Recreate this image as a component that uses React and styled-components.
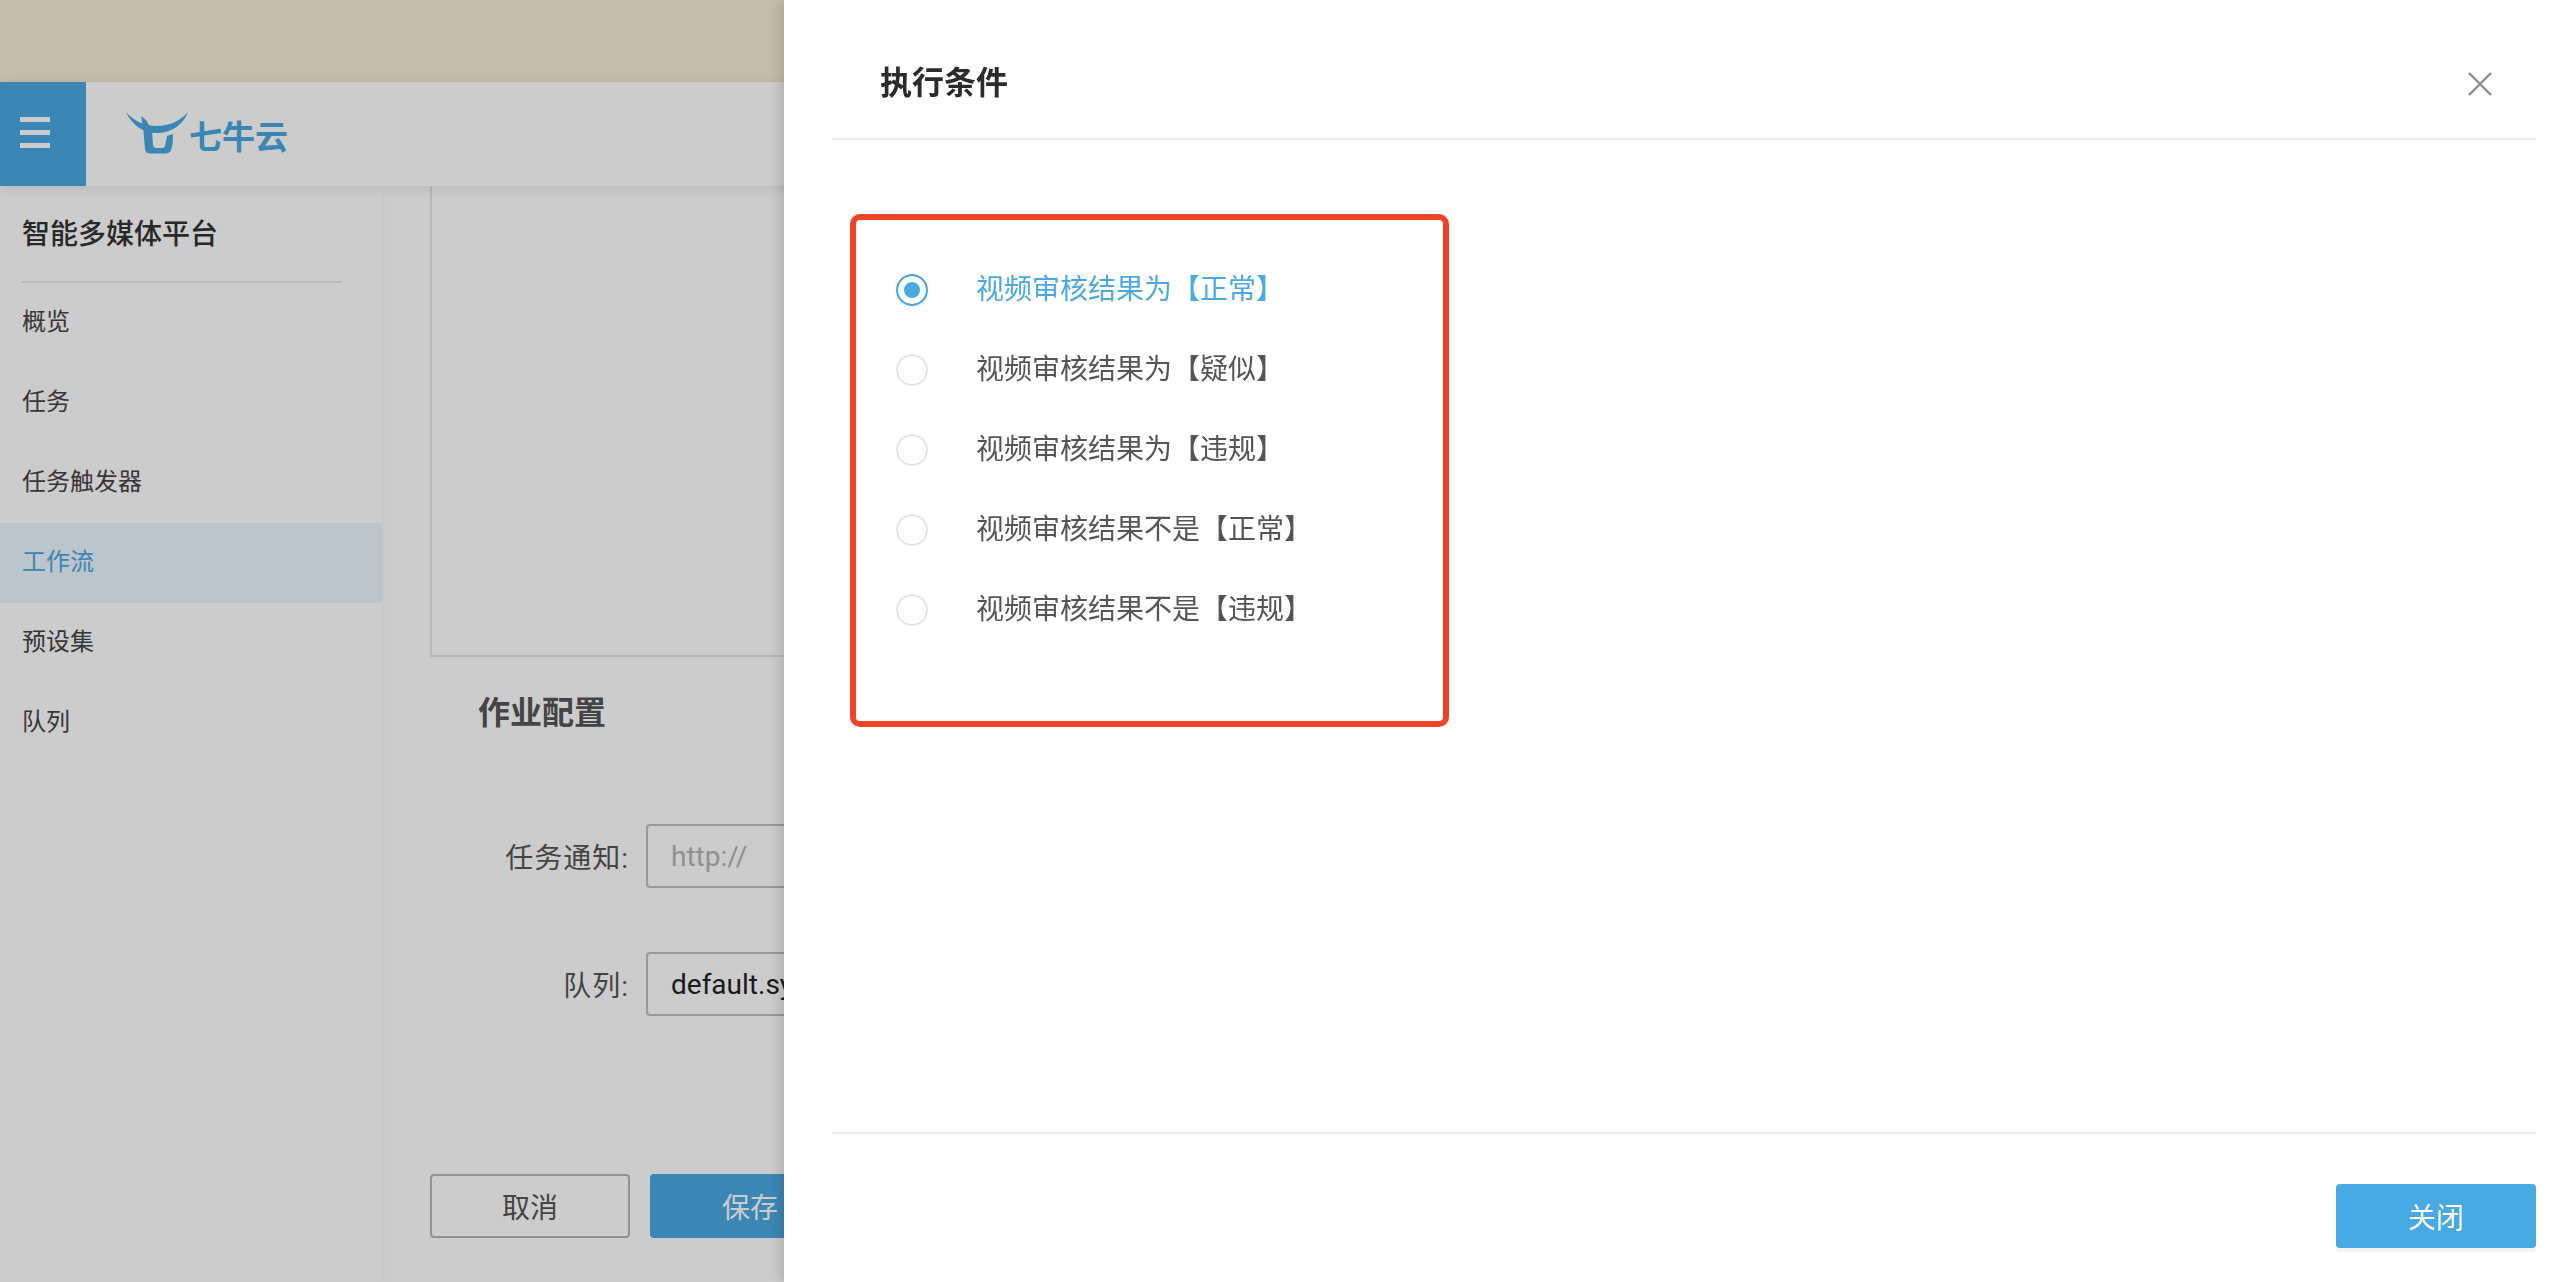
import styled, { createGlobalStyle } from "styled-components";

const navItems = ["概览", "任务", "任务触发器", "工作流", "预设集", "队列"];

const conditions = [
  "视频审核结果为【正常】",
  "视频审核结果为【疑似】",
  "视频审核结果为【违规】",
  "视频审核结果不是【正常】",
  "视频审核结果不是【违规】",
];

const BullLogo = () => (
  <svg width="62" height="42" viewBox="0 0 62 42" xmlns="http://www.w3.org/2000/svg">
    <g fill="#49a9e3">
      <path d="M0 0C8 9 19 14 31 14C43 14 54 9 62 0C57 13 45 21 31 21C17 21 6 13 0 0Z" />
      <path d="M15 4L20 8L26 18L27 33C27.300 35 28.500 36 30.500 36L36 36C38 36 39 35 39.500 32L41 24L47 22C47 30 46.500 35 45 38C44 40.500 42 41.500 39 41.500L24 41.500C21 41.500 19.500 40 19 37L17 14Z" />
    </g>
  </svg>
);

const CloseIcon = () => (
  <svg width="24" height="24" viewBox="0 0 24 24" xmlns="http://www.w3.org/2000/svg">
    <path d="M1 1L23 23M23 1L1 23" stroke="#8c8c8c" strokeWidth="2.400" fill="none" />
  </svg>
);

const App = () => {
  return (
    <>
      <GlobalStyle />
      <Page>
        <Banner />
        <TopBar>
          <MenuButton>
            <MenuLine />
            <MenuLine />
            <MenuLine />
          </MenuButton>
          <Logo>
            <BullLogo />
            <LogoText>七牛云</LogoText>
          </Logo>
        </TopBar>
        <Columns>
          <Sidebar>
            <SidebarTitle>智能多媒体平台</SidebarTitle>
            <NavList>
              {navItems.map((item) => (
                <NavItem key={item} $active={item === "工作流"}>
                  {item}
                </NavItem>
              ))}
            </NavList>
          </Sidebar>
          <Content>
            <Canvas />
            <SectionTitle>作业配置</SectionTitle>
            <FormRow>
              <FormLabel>任务通知:</FormLabel>
              <TextField placeholder="http://" readOnly />
            </FormRow>
            <FormRow>
              <FormLabel>队列:</FormLabel>
              <TextField value="default.sys" readOnly />
            </FormRow>
            <Actions>
              <GhostButton>取消</GhostButton>
              <PrimaryButton>保存</PrimaryButton>
            </Actions>
          </Content>
        </Columns>
      </Page>
      <Mask />
      <Drawer>
        <DrawerHeader>
          <DrawerTitle>执行条件</DrawerTitle>
          <CloseButton aria-label="关闭">
            <CloseIcon />
          </CloseButton>
        </DrawerHeader>
        <DrawerBody>
          <Highlight>
            {conditions.map((text, i) => (
              <RadioRow key={text} $checked={i === 0}>
                <RadioDot $checked={i === 0} />
                <RadioText>{text}</RadioText>
              </RadioRow>
            ))}
          </Highlight>
        </DrawerBody>
        <DrawerFooter>
          <CloseAction>关闭</CloseAction>
        </DrawerFooter>
      </Drawer>
    </>
  );
};

export default App;

const GlobalStyle = createGlobalStyle`
  html, body {
    margin: 0;
    height: 100%;
    overflow: hidden;
    background: #fff;
  }
  * {
    box-sizing: border-box;
  }
  body, button, input {
    font-family: Roboto, "Noto Sans CJK SC", sans-serif;
  }
`;

const Page = styled.div`
  width: 2572px;
  height: 1282px;
  display: flex;
  flex-direction: column;
  overflow: hidden;
`;

const Banner = styled.div`
  height: 82px;
  flex: none;
  background: #f7ecd7;
`;

const TopBar = styled.header`
  height: 104px;
  flex: none;
  display: flex;
  align-items: stretch;
  background: #fff;
  box-shadow: 0 2px 12px rgba(0, 0, 0, 0.1);
  position: relative;
  z-index: 1;
`;

const MenuButton = styled.div`
  width: 86px;
  background: #49a9e3;
  display: flex;
  flex-direction: column;
  justify-content: center;
  align-items: flex-start;
  gap: 8px;
  padding: 0 0 4px 20px;
`;

const MenuLine = styled.span`
  width: 30px;
  height: 5px;
  background: #fff;
`;

const Logo = styled.div`
  display: flex;
  align-items: flex-start;
  padding: 30px 0 0 40px;
`;

const LogoText = styled.span`
  font-family: "Noto Sans CJK SC", sans-serif;
  font-size: 33px;
  font-weight: 700;
  line-height: 42px;
  color: #49a9e3;
  margin: 2px 0 0 1px;
`;

const Columns = styled.div`
  flex: 1;
  display: flex;
  min-height: 0;
`;

const Sidebar = styled.aside`
  width: 382px;
  flex: none;
  background: #fff;
  box-shadow: 1px 0 4px rgba(0, 0, 0, 0.03);
  padding-top: 24px;
`;

const SidebarTitle = styled.div`
  margin: 0 40px 0 22px;
  height: 73px;
  font-size: 28px;
  font-weight: 500;
  line-height: 50px;
  color: #333;
  border-bottom: 2px solid #e8e8e8;
`;

const NavList = styled.ul`
  list-style: none;
  margin: 0;
  padding: 0;
`;

const NavItem = styled.li`
  height: 80px;
  line-height: 78px;
  padding-left: 22px;
  font-size: 24px;
  color: ${(p) => (p.$active ? "#49a9e3" : "#444")};
  background: ${(p) => (p.$active ? "#ebf5ff" : "transparent")};
`;

const Content = styled.main`
  flex: 1;
  padding-left: 48px;
  min-width: 0;
`;

const Canvas = styled.div`
  height: 471px;
  border-left: 2px solid #e5e5e5;
  border-bottom: 2px solid #e5e5e5;
`;

const SectionTitle = styled.h2`
  margin: 32px 0 87px 48px;
  font-size: 32px;
  font-weight: 700;
  line-height: 48px;
  color: #555;
`;

const FormRow = styled.div`
  display: flex;
  align-items: center;
  height: 64px;
  margin-top: 64px;
`;

const FormLabel = styled.label`
  width: 199px;
  text-align: right;
  font-size: 28px;
  letter-spacing: 1px;
  color: #555;
  margin-right: 17px;
`;

const TextField = styled.input`
  width: 420px;
  height: 64px;
  padding: 0 23px;
  font-size: 28px;
  color: #222;
  background: #fff;
  border: 2px solid #bfbfbf;
  border-radius: 4px;
  outline: none;
  &::placeholder {
    color: #b4b4b4;
  }
`;

const Actions = styled.div`
  display: flex;
  gap: 20px;
  margin-top: 158px;
`;

const GhostButton = styled.button`
  width: 200px;
  height: 64px;
  font-size: 28px;
  color: #555;
  background: #fff;
  border: 2px solid #b8b8b8;
  border-radius: 4px;
`;

const PrimaryButton = styled.button`
  width: 200px;
  height: 64px;
  font-size: 28px;
  color: #fff;
  background: #49a9e3;
  border: none;
  border-radius: 4px;
`;

const Mask = styled.div`
  position: fixed;
  inset: 0;
  z-index: 10;
  background: rgba(0, 0, 0, 0.2);
`;

const Drawer = styled.section`
  position: fixed;
  top: 0;
  right: 0;
  bottom: 0;
  width: 1788px;
  z-index: 11;
  display: flex;
  flex-direction: column;
  padding: 0 36px 0 48px;
  background: #fff;
  box-shadow: -4px 0 12px rgba(0, 0, 0, 0.15);
`;

const DrawerHeader = styled.div`
  height: 140px;
  flex: none;
  display: flex;
  justify-content: space-between;
  align-items: flex-start;
  padding: 55px 44px 0 48px;
  border-bottom: 2px solid #e8e8e8;
`;

const DrawerTitle = styled.h1`
  margin: 0;
  font-size: 32px;
  font-weight: 700;
  line-height: 56px;
  color: #2b2b2b;
`;

const CloseButton = styled.button`
  width: 24px;
  height: 24px;
  margin-top: 17px;
  padding: 0;
  border: none;
  background: none;
  line-height: 0;
`;

const DrawerBody = styled.div`
  flex: 1;
  padding: 74px 0 0 18px;
`;

const Highlight = styled.div`
  width: 599px;
  height: 513px;
  padding: 30px 0 0 40px;
  border: 6px solid #ee4326;
  border-radius: 10px;
`;

const RadioRow = styled.label`
  display: flex;
  align-items: center;
  height: 80px;
  font-size: 28px;
  color: ${(p) => (p.$checked ? "#49a9e3" : "#555")};
`;

const RadioText = styled.span`
  margin-bottom: 6px;
`;

const RadioDot = styled.span`
  width: 32px;
  height: 32px;
  flex: none;
  margin-right: 48px;
  border-radius: 50%;
  border: 2px solid ${(p) => (p.$checked ? "#49a9e3" : "#e5e5e5")};
  background: ${(p) => (p.$checked ? "#49a9e3" : "#fff")};
  box-shadow: ${(p) => (p.$checked ? "inset 0 0 0 6px #fff" : "none")};
`;

const DrawerFooter = styled.div`
  height: 150px;
  flex: none;
  display: flex;
  justify-content: flex-end;
  padding-top: 50px;
  border-top: 2px solid #e8e8e8;
`;

const CloseAction = styled.button`
  width: 200px;
  height: 64px;
  font-size: 28px;
  color: #fff;
  background: #49a9e3;
  border: none;
  border-radius: 4px;
  box-shadow: 0 4px 0 #f2f2f2;
`;
